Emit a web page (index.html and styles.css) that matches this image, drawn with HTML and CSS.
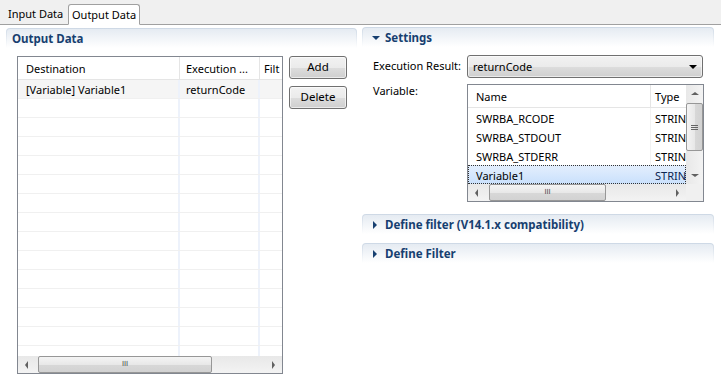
FILE: index.html
```html
<!DOCTYPE html>
<html>
<head>
<meta charset="utf-8">
<link rel="stylesheet" href="styles.css">
</head>
<body>
<div class="tabbar">
  <div class="tab">Input Data</div>
  <div class="tab active">Output Data</div>
  <div class="tabfill"></div>
</div>
<div class="main">
  <div class="col left">
    <div class="sec"><div class="sec-in"><span class="title">Output Data</span></div></div>
    <div class="left-content">
      <div class="grid">
        <div class="ghead">
          <div class="c c1">Destination</div>
          <div class="c c2">Execution ...</div>
          <div class="c c3">Filt</div>
        </div>
        <div class="gbody">
          <div class="grow sel"><div class="c c1">[Variable] Variable1</div><div class="c c2">returnCode</div><div class="c c3"></div></div>
          <div class="grow"><div class="c c1"></div><div class="c c2"></div><div class="c c3"></div></div>
          <div class="grow"><div class="c c1"></div><div class="c c2"></div><div class="c c3"></div></div>
          <div class="grow"><div class="c c1"></div><div class="c c2"></div><div class="c c3"></div></div>
          <div class="grow"><div class="c c1"></div><div class="c c2"></div><div class="c c3"></div></div>
          <div class="grow"><div class="c c1"></div><div class="c c2"></div><div class="c c3"></div></div>
          <div class="grow"><div class="c c1"></div><div class="c c2"></div><div class="c c3"></div></div>
          <div class="grow"><div class="c c1"></div><div class="c c2"></div><div class="c c3"></div></div>
          <div class="grow"><div class="c c1"></div><div class="c c2"></div><div class="c c3"></div></div>
          <div class="grow"><div class="c c1"></div><div class="c c2"></div><div class="c c3"></div></div>
          <div class="grow"><div class="c c1"></div><div class="c c2"></div><div class="c c3"></div></div>
          <div class="grow"><div class="c c1"></div><div class="c c2"></div><div class="c c3"></div></div>
          <div class="grow"><div class="c c1"></div><div class="c c2"></div><div class="c c3"></div></div>
          <div class="grow"><div class="c c1"></div><div class="c c2"></div><div class="c c3"></div></div>
          <div class="grow"><div class="c c1"></div><div class="c c2"></div><div class="c c3"></div></div>
        </div>
        <div class="hscroll">
          <div class="arr"><span class="tri-l"></span></div>
          <div class="track"><div class="thumb th-left"><span class="grip">III</span></div></div>
          <div class="arr"><span class="tri-r"></span></div>
        </div>
      </div>
      <div class="buttons">
        <div class="btn">Add</div>
        <div class="btn">Delete</div>
      </div>
    </div>
  </div>
  <div class="col right">
    <div class="sec sec-r"><div class="sec-in"><span class="tw-down"></span><span class="title">Settings</span></div></div>
    <div class="form">
      <div class="frow">
        <div class="lbl">Execution Result:</div>
        <div class="combo"><span>returnCode</span><span class="cdrop"></span></div>
      </div>
      <div class="frow vrow">
        <div class="lbl">Variable:</div>
        <div class="vtable">
          <div class="vmain">
            <div class="vview">
              <div class="vhead"><div class="v1">Name</div><div class="v2">Type</div></div>
              <div class="vbody">
                <div class="vrow-i"><div class="v1">SWRBA_RCODE</div><div class="v2">STRIN</div></div>
                <div class="vrow-i"><div class="v1">SWRBA_STDOUT</div><div class="v2">STRIN</div></div>
                <div class="vrow-i"><div class="v1">SWRBA_STDERR</div><div class="v2">STRIN</div></div>
                <div class="vrow-i vsel"><div class="v1">Variable1</div><div class="v2">STRIN</div></div>
              </div>
            </div>
            <div class="vscroll">
              <div class="varr"><span class="tri-u"></span></div>
              <div class="vtrack"><div class="vthumb"><span class="vgrip"></span></div></div>
              <div class="varr"><span class="tri-d"></span></div>
            </div>
          </div>
          <div class="vbottom">
            <div class="hscroll hs-small">
              <div class="arr"><span class="tri-l"></span></div>
              <div class="track"><div class="thumb th-var"><span class="grip">III</span></div></div>
              <div class="arr"><span class="tri-r"></span></div>
            </div>
            <div class="corner"></div>
          </div>
        </div>
      </div>
    </div>
    <div class="sec sec-r sec-c1"><div class="sec-in"><span class="tw-right"></span><span class="title">Define filter (V14.1.x compatibility)</span></div></div>
    <div class="sec sec-r sec-c2"><div class="sec-in"><span class="tw-right"></span><span class="title">Define Filter</span></div></div>
  </div>
</div>
</body>
</html>
```

FILE: styles.css
```css
* { box-sizing: border-box; }
html, body { margin: 0; padding: 0; }
body {
  width: 721px;
  height: 382px;
  overflow: hidden;
  background: #fff;
  font-family: "Noto Sans", "Open Sans", sans-serif;
  font-size: 11px;
  color: #000;
}

/* tabs */
.tabbar {
  display: flex;
  height: 25px;
  background: #f0f0f0;
  align-items: flex-end;
}
.tab {
  height: 21px;
  line-height: 19px;
  width: 68px;
  padding: 0 0 0 8px;
  border-bottom: 1px solid #a0a0a0;
  white-space: nowrap;
  font-size: 11px;
}
.tab.active {
  background: #fff;
  border: 1px solid #a0a0a0;
  border-bottom-color: #fff;
  border-radius: 3px 3px 0 0;
  padding: 0 0 0 3px;
  width: 72px;
}
.tabfill {
  flex: 1;
  border-bottom: 1px solid #a0a0a0;
}

.main {
  display: flex;
  padding-left: 6px;
  gap: 5px;
}
.col.left { width: 351px; padding-top: 3px; }
.col.right { width: 352px; padding-top: 2px; }

/* section headers */
.sec {
  height: 20px;
  padding: 1px 1px 0 1px;
  border-radius: 4px 4px 0 0;
  background: linear-gradient(#cdd8e5, rgba(255,255,255,0));
}
.sec-in {
  height: 100%;
  border-radius: 3px 3px 0 0;
  background: linear-gradient(#e5ebf2, #ffffff);
  display: flex;
  align-items: center;
  padding-left: 5px;
}
.sec-r .sec-in { padding-left: 9px; }
.title {
  font-weight: bold;
  font-size: 11.5px;
  color: #173f70;
  white-space: nowrap;
}
.tw-down {
  width: 0; height: 0;
  border-left: 4px solid transparent;
  border-right: 4px solid transparent;
  border-top: 4px solid #173f70;
  margin-right: 5px;
  margin-top: 1px;
}
.tw-right {
  width: 0; height: 0;
  border-top: 4px solid transparent;
  border-bottom: 4px solid transparent;
  border-left: 4px solid #173f70;
  margin-right: 8px;
  margin-left: 1px;
}

/* left content */
.left-content {
  display: flex;
  padding-left: 11px;
  padding-top: 8px;
  gap: 6px;
  align-items: flex-start;
}
.grid {
  width: 266px;
  height: 318px;
  border: 1px solid #828790;
  display: flex;
  flex-direction: column;
}
.ghead {
  display: flex;
  height: 23px;
  border-bottom: 1px solid #e5e5e5;
  flex: none;
}
.ghead .c {
  line-height: 22px;
  padding-top: 1px;
  border-right: 1px solid #e5e5e5;
}
.c { white-space: nowrap; overflow: hidden; }
.c1 { width: 162px; padding-left: 8px; }
.c2 { width: 80px; padding-left: 6px; }
.c3 { width: 22px; padding-left: 4px; }
.ghead .c3 { border-right: none; }
.gbody { flex: 1; overflow: hidden; }
.grow {
  display: flex;
  height: 19px;
  border-bottom: 1px solid #f0f0f0;
}
.grow .c { line-height: 18px; padding-top: 1px; }
.grow .c1, .grow .c2 { border-right: 2px solid #edf2fb; }
.grow.sel { background: #f5f5f5; }

/* scrollbars */
.hscroll {
  display: flex;
  height: 17px;
  flex: none;
  background: linear-gradient(#e8e8e8, #f3f3f3);
}
.arr {
  width: 17px;
  display: flex;
  align-items: center;
  justify-content: center;
  flex: none;
}
.track { flex: 1; position: relative; }
.thumb {
  position: absolute;
  top: 0;
  height: 17px;
  border: 1px solid #979797;
  border-radius: 2px;
  background: linear-gradient(#f4f4f4, #e8e8e8 50%, #d8d8d8 51%, #d2d2d2);
  display: flex;
  align-items: center;
  justify-content: center;
}
.th-left { left: 3px; width: 174px; }
.th-var { left: 4px; width: 117px; }
.grip {
  font-family: "DejaVu Sans", sans-serif;
  font-size: 7px;
  color: #444;
  line-height: 7px;
}
.tri-l, .tri-r, .tri-u, .tri-d { width: 0; height: 0; }
.tri-l { border-top: 4px solid transparent; border-bottom: 4px solid transparent; border-right: 3px solid #606060; }
.tri-r { border-top: 4px solid transparent; border-bottom: 4px solid transparent; border-left: 3px solid #606060; }
.tri-u { border-left: 4px solid transparent; border-right: 4px solid transparent; border-bottom: 3px solid #606060; }
.tri-d { border-left: 4px solid transparent; border-right: 4px solid transparent; border-top: 3px solid #606060; }

/* buttons */
.buttons {
  display: flex;
  flex-direction: column;
  gap: 7px;
}
.btn {
  width: 58px;
  height: 23px;
  border: 1px solid #707070;
  border-radius: 3px;
  background: linear-gradient(#f2f2f2, #ebebeb 50%, #dddddd 51%, #cfcfcf);
  box-shadow: inset 0 0 0 1px rgba(255,255,255,0.6);
  text-align: center;
  line-height: 20px;
  font-size: 11.5px;
}

/* right form */
.form {
  padding: 8px 11px 0 11px;
}
.frow { display: flex; }
.lbl { width: 94px; flex: none; white-space: nowrap; line-height: 22px; }
.combo {
  width: 237px;
  height: 23px;
  border: 1px solid #707070;
  border-radius: 3px;
  background: linear-gradient(#f2f2f2, #ebebeb 50%, #dddddd 51%, #cfcfcf);
  box-shadow: inset 0 0 0 1px rgba(255,255,255,0.6);
  display: flex;
  align-items: center;
  justify-content: space-between;
  padding: 0 5px 0 5px;
}
.cdrop {
  width: 0; height: 0;
  border-left: 4px solid transparent;
  border-right: 4px solid transparent;
  border-top: 4px solid #000;
}
.vrow { margin-top: 6px; }
.vrow .lbl { line-height: 14px; }
.vtable {
  width: 237px;
  height: 118px;
  border: 1px solid #828790;
  display: flex;
  flex-direction: column;
}
.vmain { display: flex; height: 99px; }
.vview { flex: 1; overflow: hidden; }
.vhead { display: flex; height: 23px; border-bottom: 1px solid #e5e5e5; }
.vhead > div { line-height: 22px; padding-top: 1px; }
.v1 { width: 183px; padding-left: 8px; border-right: 1px solid #e5e5e5; white-space: nowrap; overflow: hidden; flex: none; }
.v2 { width: 36px; padding-left: 4px; white-space: nowrap; overflow: hidden; flex: none; }
.vrow-i { display: flex; height: 19px; line-height: 18px; }
.vrow-i > div { padding-top: 2px; }
.vrow-i .v1 { border-right: 1px solid #f2f2f2; }
.vsel {
  background: linear-gradient(#e4effd, #c9e0fc);
  outline: 1px dotted #333;
  outline-offset: -1px;
}
.vsel .v1 { border-right-color: transparent; }
.vsel .v2 { color: #0a2450; }
.vscroll {
  width: 17px;
  flex: none;
  display: flex;
  flex-direction: column;
  background: linear-gradient(90deg, #e8e8e8, #f3f3f3);
}
.varr { height: 17px; display: flex; align-items: center; justify-content: center; flex: none; }
.vtrack { flex: 1; position: relative; }
.vthumb {
  position: absolute;
  left: 0;
  top: 1px;
  width: 17px;
  height: 48px;
  border: 1px solid #979797;
  border-radius: 2px;
  background: linear-gradient(90deg, #f4f4f4, #e8e8e8 50%, #d8d8d8 51%, #d2d2d2);
  display: flex;
  align-items: center;
  justify-content: center;
}
.vgrip {
  width: 7px;
  height: 5px;
  border-top: 1px solid #666;
  border-bottom: 1px solid #666;
  position: relative;
}
.vgrip::after {
  content: "";
  position: absolute;
  left: 0; right: 0; top: 1px;
  border-top: 1px solid #666;
}
.vbottom { display: flex; flex: 1; }
.hs-small { flex: 1; height: 17px; }
.corner { width: 17px; background: #f0f0f0; }

.sec-c1 { margin-top: 12px; }
.sec-c2 { margin-top: 9px; }
```
